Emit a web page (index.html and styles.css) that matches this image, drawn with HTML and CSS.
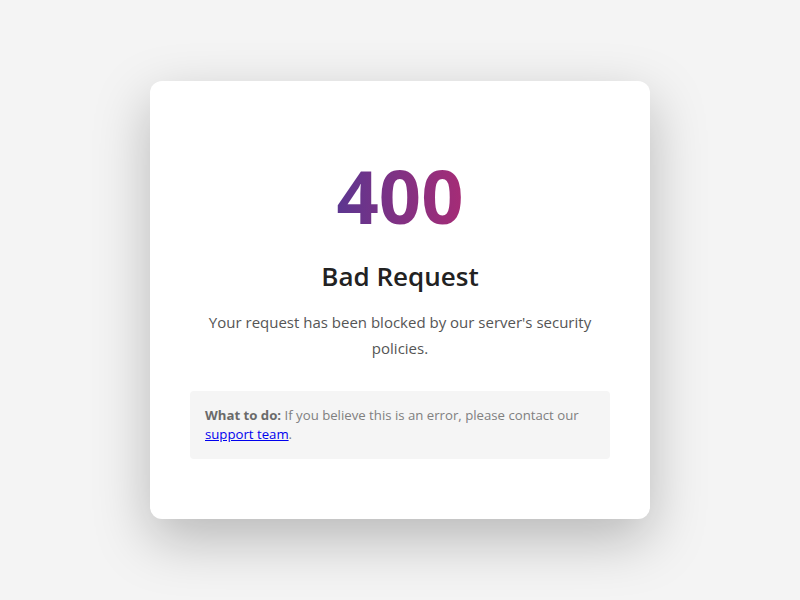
FILE: index.html
```html
<!DOCTYPE html>
<html lang="en">
<head>
<meta charset="utf-8">
<title>400 Bad Request</title>
<link rel="stylesheet" href="styles.css">
</head>
<body>
<main class="card">
  <h1 class="code">400</h1>
  <h2 class="title">Bad Request</h2>
  <p class="message">Your request has been blocked by our server's security policies.</p>
  <div class="tip"><strong>What to do:</strong> If you believe this is an error, please contact our <a href="#">support team</a>.</div>
</main>
</body>
</html>
```
FILE: styles.css
```css
html, body {
  margin: 0;
  padding: 0;
}
body {
  background: #f4f4f4;
  font-family: "Segoe UI", "Open Sans", "Noto Sans", sans-serif;
  min-height: 100vh;
  display: flex;
  align-items: center;
  justify-content: center;
}
.card {
  width: 500px;
  box-sizing: border-box;
  background: #fff;
  border-radius: 12px;
  padding: 60px 40px 60px;
  text-align: center;
  box-shadow: 0 20px 55px rgba(0, 0, 0, 0.25);
}
.code {
  width: fit-content;
  margin: 0 auto;
  padding-top: 11px;
  font-size: 74px;
  font-weight: 700;
  line-height: 1.2;
  background: linear-gradient(90deg, #5c3690, #a62c76);
  -webkit-background-clip: text;
  background-clip: text;
  color: transparent;
}
.title {
  margin: 18px 0 15px;
  font-size: 26px;
  font-weight: 600;
  color: #222;
}
.message {
  margin: 0 0 30px;
  font-size: 15px;
  line-height: 26px;
  color: #555;
}
.tip {
  background: #f5f5f5;
  border-radius: 4px;
  padding: 15px;
  font-size: 13.2px;
  line-height: 19px;
  color: #808080;
  text-align: left;
}
.tip strong {
  color: #6a6a6a;
}
.tip a {
  color: #0000ee;
}
```
